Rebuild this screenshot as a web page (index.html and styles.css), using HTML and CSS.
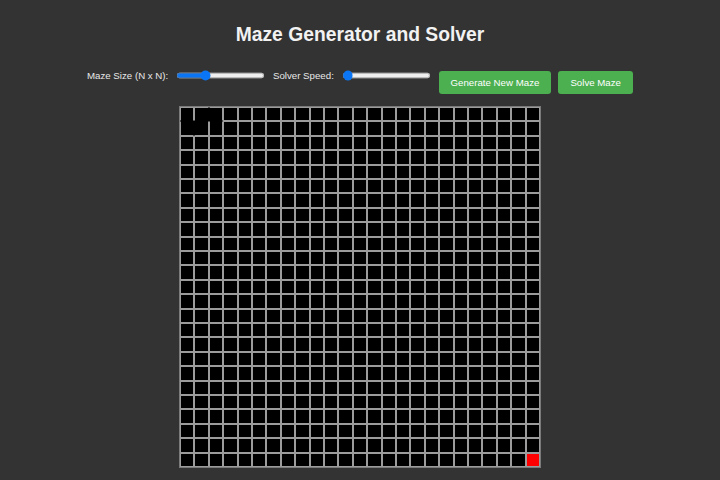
FILE: index.html
```html
<!DOCTYPE html>
<html>
<head>
    <title>Maze Generator and Solver</title>
    <link rel="stylesheet" href="styles.css">
</head>
<body>
    <h1>Maze Generator and Solver</h1>

    <div class="controls">
        <label for="mazeSize">Maze Size (N x N):</label>
        <input type="range" id="mazeSize" min="5" max="70" value="25">
        <label for="speed">Solver Speed:</label>
        <input type="range" id="speed" min="0" max="100" value="1">
        <button id="generateBtn">Generate New Maze</button>
        <button id="solveBtn">Solve Maze</button>
    </div>

    <div id="maze" class="maze"></div>

    <script>
        const size = 25;
        const maze = document.getElementById('maze');

        const carved = [
            [[0, 0], [1, 0]],
            [[1, 0], [1, 1]],
            [[1, 1], [0, 1]],
            [[0, 1], [0, 2]],
            [[0, 2], [1, 2]]
        ];

        const cells = [];
        for (let r = 0; r < size; r++) {
            cells.push([]);
            for (let c = 0; c < size; c++) {
                const cell = document.createElement('div');
                cell.className = 'cell';
                maze.appendChild(cell);
                cells[r].push(cell);
            }
        }

        carved.forEach(function(pair) {
            const a = pair[0], b = pair[1];
            const ca = cells[a[0]][a[1]];
            const cb = cells[b[0]][b[1]];
            if (a[0] === b[0]) {
                const left = a[1] < b[1] ? ca : cb;
                const right = a[1] < b[1] ? cb : ca;
                left.classList.add('no-right');
                right.classList.add('no-left');
            } else {
                const top = a[0] < b[0] ? ca : cb;
                const bottom = a[0] < b[0] ? cb : ca;
                top.classList.add('no-bottom');
                bottom.classList.add('no-top');
            }
        });

        cells[size - 1][size - 1].classList.add('end');
    </script>
</body>
</html>
```

FILE: styles.css
```css
body {
    font-family: "Liberation Sans", Arial, sans-serif;
    background-color: #333333;
    color: #e8e8e8;
    margin: 0;
    padding-top: 23px;
}
h1 {
    font-size: 19.3px;
    line-height: 24px;
    margin: 0;
    text-align: center;
    color: #f2f2f2;
}
.controls {
    display: flex;
    justify-content: center;
    align-items: flex-start;
    gap: 8px;
    margin-top: 23px;
    font-size: 9.7px;
    line-height: 12px;
}
.controls input[type="range"] {
    width: 133px;
    margin: 0;
    zoom: 0.667;
    accent-color: #0b76f5;
}
button {
    margin-top: 1px;
    padding: 0 12px;
    height: 23px;
    font-family: inherit;
    font-size: 9.7px;
    background-color: #4CAF50;
    color: white;
    border: none;
    border-radius: 3px;
    cursor: pointer;
}
#solveBtn {
    margin-left: -1px;
}
.maze {
    display: grid;
    grid-template-columns: repeat(25, 1fr);
    grid-template-rows: repeat(25, 1fr);
    width: 360px;
    height: 360px;
    margin: 12px auto 0;
    border: 1px solid #7a7a7a;
    background-color: #000;
}
.cell {
    box-sizing: border-box;
    border: 1px solid #9c9c9c;
    background-color: #000;
}
.cell.no-top { border-top-color: #000; }
.cell.no-right { border-right-color: #000; }
.cell.no-bottom { border-bottom-color: #000; }
.cell.no-left { border-left-color: #000; }
.cell.end {
    background-color: #ff0000;
}
```
